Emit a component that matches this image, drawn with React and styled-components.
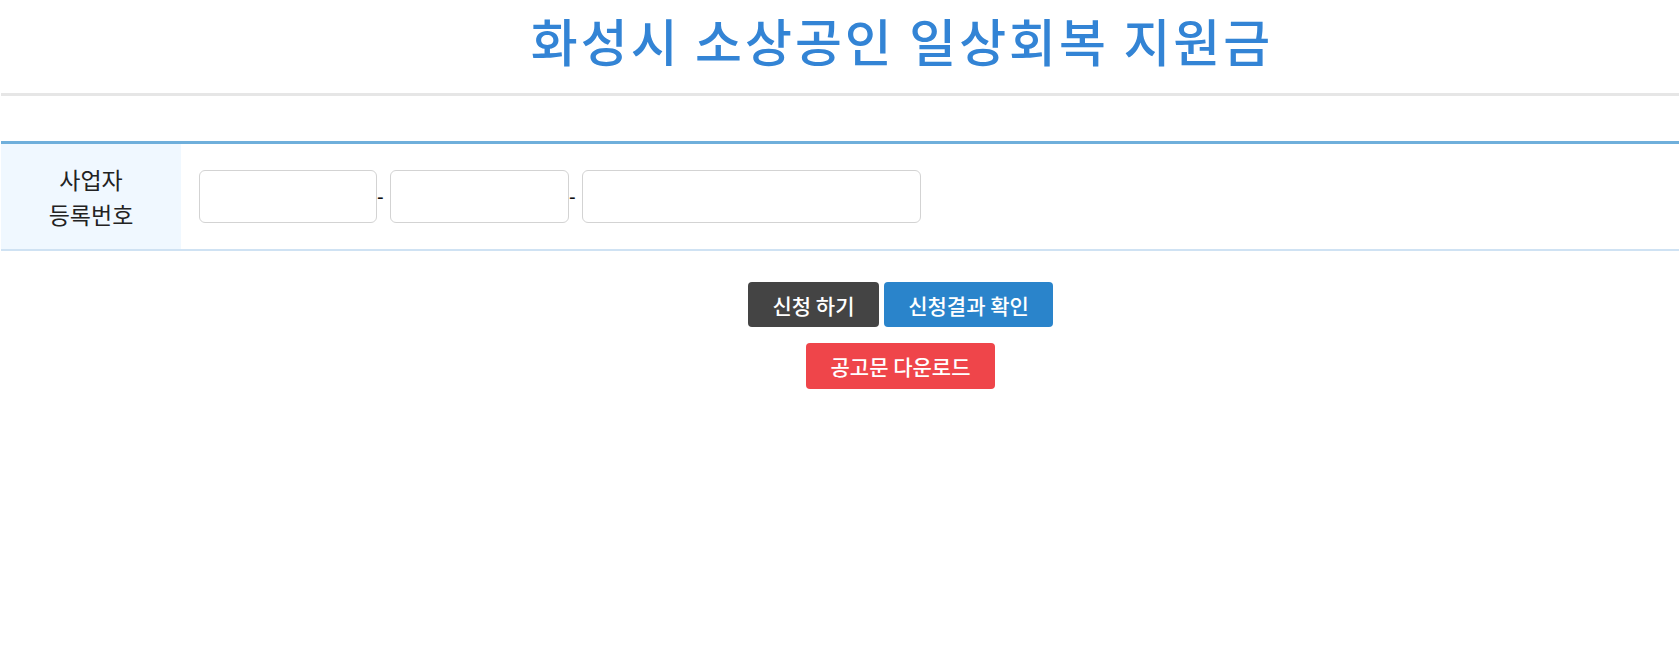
import React from 'react'
import styled, { createGlobalStyle } from 'styled-components'

const GlobalStyle = createGlobalStyle`
  body {
    margin: 0;
    background: #ffffff;
    font-family: "Noto Sans CJK KR", "Noto Sans", sans-serif;
    color: #222222;
  }
`

const Styled = {
    Page: styled.div`
    display: flex;
    flex-direction: column;
    padding-left: 1px;
  `,
    Header: styled.header`
    height: 93px;
    border-bottom: 3px solid #e6e6e6;
  `,
    Title: styled.h1`
    margin: 0;
    padding-left: 124px;
    text-align: center;
    font-size: 51px;
    line-height: 80px;
    font-weight: 500;
    color: #3384d5;
    letter-spacing: 3px;
  `,
    Table: styled.div`
    display: grid;
    grid-template-columns: 180px 1fr;
    margin-top: 45px;
    border-top: 3px solid #6fafdb;
    border-bottom: 2px solid #cfe2f3;
  `,
    Label: styled.div`
    display: flex;
    flex-direction: column;
    align-items: center;
    justify-content: center;
    height: 105px;
    background-color: #f0f8ff;
    font-size: 23px;
    line-height: 35px;
    color: #222222;
  `,
    Field: styled.div`
    display: flex;
    align-items: center;
    padding-left: 18px;
  `,
    Input: styled.input`
    box-sizing: border-box;
    width: ${props => props.width}px;
    height: 53px;
    border: 1px solid #d3d3d3;
    border-radius: 6px;
    padding: 0 10px;
    font-size: 16px;
    outline: none;
  `,
    Dash: styled.span`
    width: 13px;
    font-family: "Liberation Sans", Arial, sans-serif;
    font-size: 20px;
    line-height: 20px;
    color: #111111;
  `,
    Actions: styled.div`
    display: flex;
    flex-direction: column;
    align-items: center;
    gap: 16px;
    margin-top: 31px;
    padding-left: 121px;
  `,
    Row: styled.div`
    display: flex;
    gap: 5px;
  `,
    Button: styled.button`
    width: ${props => props.width}px;
    height: ${props => props.height || 45}px;
    padding: 0;
    border: none;
    border-radius: 4px;
    background-color: ${props => props.bg};
    color: #ffffff;
    font-family: "Noto Sans CJK KR", "Noto Sans", sans-serif;
    font-size: 21px;
    font-weight: 500;
    cursor: pointer;
  `
}

const App = () => {
    return (
        <>
            <GlobalStyle />
            <Styled.Page>
                <Styled.Header>
                    <Styled.Title>화성시 소상공인 일상회복 지원금</Styled.Title>
                </Styled.Header>
                <Styled.Table>
                    <Styled.Label>
                        <span>사업자</span>
                        <span>등록번호</span>
                    </Styled.Label>
                    <Styled.Field>
                        <Styled.Input type="text" width={178} maxLength={3} />
                        <Styled.Dash>-</Styled.Dash>
                        <Styled.Input type="text" width={179} maxLength={2} />
                        <Styled.Dash>-</Styled.Dash>
                        <Styled.Input type="text" width={339} maxLength={5} />
                    </Styled.Field>
                </Styled.Table>
                <Styled.Actions>
                    <Styled.Row>
                        <Styled.Button bg="#444444" width={131}>신청 하기</Styled.Button>
                        <Styled.Button bg="#2a84cb" width={169}>신청결과 확인</Styled.Button>
                    </Styled.Row>
                    <Styled.Button bg="#ef454a" width={189} height={46}>공고문 다운로드</Styled.Button>
                </Styled.Actions>
            </Styled.Page>
        </>
    )
}

export default App
